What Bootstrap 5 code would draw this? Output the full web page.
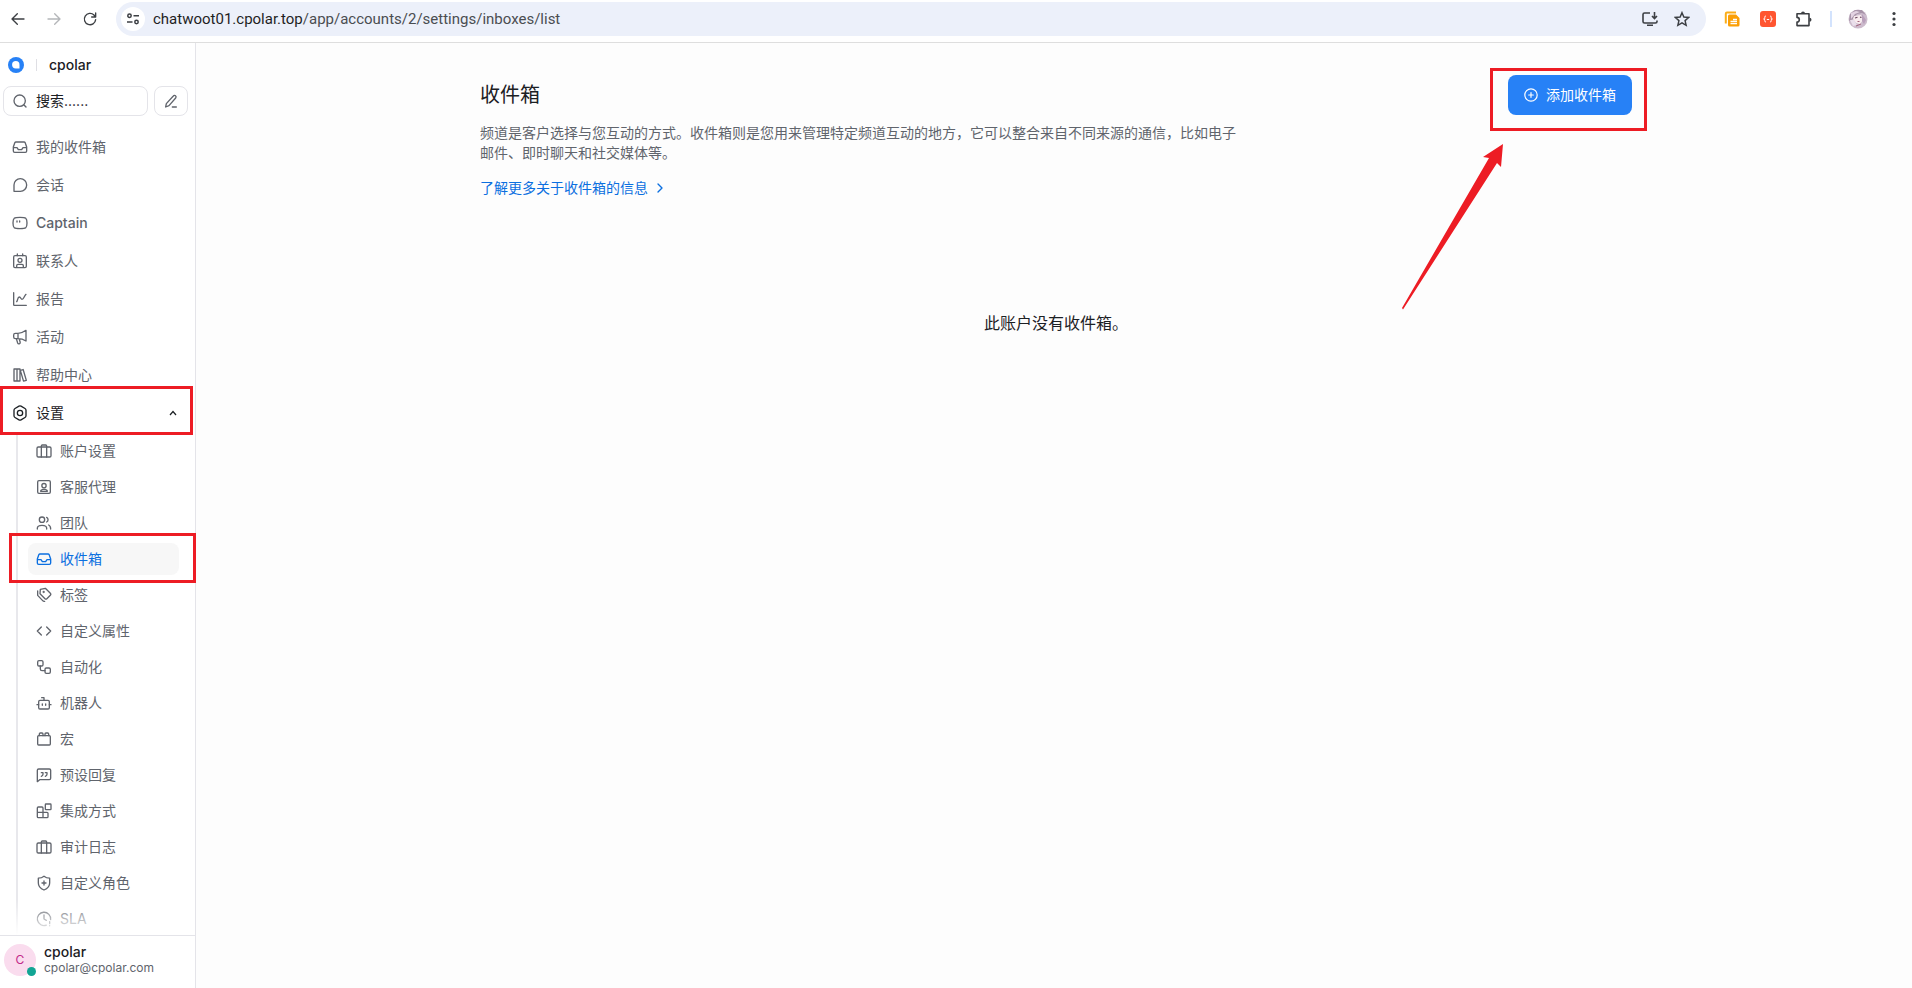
<!DOCTYPE html>
<html lang="zh-CN">
<head>
<meta charset="utf-8">
<meta name="viewport" content="width=device-width, initial-scale=1">
<title>收件箱</title>
<link rel="stylesheet" href="https://cdn.jsdelivr.net/npm/bootstrap@5.3.0/dist/css/bootstrap.min.css">
<style>
  body { font-family: Inter, "Noto Sans CJK SC", sans-serif; font-size: 14px; line-height: 20px; color: #1c2024; background: #fdfdfd; }
  svg { flex: none; display: block; }
  .ico { width: 16px; height: 16px; fill: none; stroke: currentColor; stroke-width: 2; stroke-linecap: round; stroke-linejoin: round; }
  .bare { border: 0; background: none; padding: 0; color: inherit; }
  .muted { color: #60646c; }

  .toolbar { height: 43px; padding: 2px 8px 6px 10px; border-bottom: 1px solid #dedede; background: #fff; color: #3c3f43; }
  .toolbar-nav { width: 106px; gap: 20px; }
  .toolbar-nav .off { color: #b4b6b9; }
  .omnibox { height: 34px; background: #ecf0fa; padding: 0 16px 0 5px; }
  .site-info { width: 24px; height: 24px; background: #fff; }
  .url { font-family: Roboto, sans-serif; font-size: 15px; color: #4a4d51; text-decoration: none; }
  .url b { font-weight: 400; color: #1f1f1f; }
  .toolbar-ext { width: 198px; padding-left: 16px; gap: 16px; }
  .toolbar-sep { flex: none; width: 2px; height: 16px; background: #d3e3fd; }

  .sidebar { width: 196px; background: #fff; border-right: 1px solid #e4e4e9; }
  .brand { height: 43px; padding: 0 8px; font-weight: 500; }
  .brand-sep { width: 1px; height: 12px; background: #dfdfe4; margin: 0 12px; }
  .finder { padding: 0 7px 16px 3px; gap: 6px; }
  .outlined { height: 30px; border: 1px solid #e4e4e9; border-radius: 8px; background: #fff; }
  .finder-field { padding-left: 8px; gap: 8px; min-width: 0; }
  .finder-field input { outline: 0; width: 100%; min-width: 0; }
  .finder-field input::placeholder { color: #1c2024; opacity: 1; }
  .compose { flex: none; width: 34px; }
  .menu { gap: 8px; }
  .menu-link { height: 30px; padding: 0 18px 0 12px; gap: 8px; color: #60646c; text-decoration: none; font-weight: 500; }
  .menu-link.open { color: #1c2024; }
  .menu-link.cjk { font-weight: 400; }
  .submenu { margin-left: 16px; border-left: 2px solid #e8e8ec; padding: 0 16px 0 10px; gap: 4px; margin-top: 7px; }
  .submenu a { height: 32px; padding: 0 8px; gap: 8px; border-radius: 8px; color: #60646c; text-decoration: none; }
  .submenu a.current { color: #0b6fe0; background: #f7f7f7; }
  .fade-end { left: 0; right: 0; bottom: 0; height: 36px; background: linear-gradient(to top, #fff, #fff0); pointer-events: none; }
  .profile { height: 53px; padding: 0 4px 4px; gap: 8px; border-top: 1px solid #e4e4e9; }
  .profile-pic { width: 32px; height: 32px; font-size: 12px; background: #fadcee; color: #c2298a; }
  .status-dot { width: 9px; height: 9px; background: #12a594; right: 0; bottom: 0; }
  .profile-name { line-height: 16px; font-weight: 500; }
  .profile-mail { font-size: 12px; line-height: 16px; }

  .content { padding: 32px 0 32px 4px; }
  .sheet { max-width: 1152px; }
  .page-title { font-size: 20px; line-height: 40px; font-weight: 400; margin-bottom: 8px; }
  .intro { max-width: 768px; margin-bottom: 15px; }
  .more { color: #0b6fe0; text-decoration: none; gap: 4px; }
  .add-btn { height: 40px; padding: 0 16px; border: 0; border-radius: 8px; background: #2781f6; color: #fff; gap: 8px; }
  .add-btn svg { width: 14px; height: 14px; }
  .empty { font-size: 16px; line-height: 24px; margin-top: 113px; }

  .callout { border: 3px solid #ed1c24; pointer-events: none; }
  .callout-settings { left: 0; right: 2px; top: -12px; height: 49px; }
  .callout-inbox { left: -19px; right: -17px; top: -10px; height: 50px; }
  .callout-add { left: -18px; right: -15px; top: -7px; height: 63px; }
  .pointer { left: -108px; top: 68px; }
</style>
</head>
<body>
<svg width="0" height="0" class="position-absolute" aria-hidden="true">
  <symbol id="i-inbox" viewBox="0 0 24 24"><path d="M2 13h5.500l2 3h5l2-3H22M6 4.500h12a2 2 0 0 1 1.800 1.200L22 12v6a2 2 0 0 1-2 2H4a2 2 0 0 1-2-2v-6l2.200-6.300A2 2 0 0 1 6 4.500z"/></symbol>
  <symbol id="i-case" viewBox="0 0 24 24"><rect x="1.500" y="6" width="21" height="15" rx="2"/><path d="M8 21V4.500A1.500 1.500 0 0 1 9.500 3h5A1.500 1.500 0 0 1 16 4.500V21"/></symbol>
</svg>
<div class="d-flex flex-column vh-100">
  <header class="toolbar d-flex align-items-center">
    <div class="toolbar-nav d-flex align-items-center">
      <button class="bare" aria-label="后退"><svg class="ico" viewBox="0 0 24 24"><path d="M21 12H4M11 4l-8 8 8 8"/></svg></button>
      <button class="bare off" aria-label="前进"><svg class="ico" viewBox="0 0 24 24"><path d="M3 12h17M13 4l8 8-8 8"/></svg></button>
      <button class="bare" aria-label="刷新"><svg class="ico" viewBox="0 0 24 24"><path d="M20.500 13a8.500 8.500 0 1 1-2.500-7l2.500 3M20.500 3v6h-6"/></svg></button>
    </div>
    <div class="omnibox d-flex align-items-center flex-grow-1 rounded-pill">
      <button class="bare site-info rounded-circle d-flex align-items-center justify-content-center" aria-label="网站信息"><svg width="12" height="12" viewBox="0 0 12 12" fill="none" stroke="currentColor" stroke-width="1.500"><circle cx="2.500" cy="2.800" r="1.700"/><path d="M6.500 2.800H12M0 9h5.500"/><circle cx="9.500" cy="9" r="1.700"/></svg></button>
      <a class="url ms-2 me-auto" href="#"><b>chatwoot01.cpolar.top</b>/app/accounts/2/settings/inboxes/list</a>
      <button class="bare me-3" aria-label="安装"><svg width="16" height="16" viewBox="0 0 16 16" fill="none" stroke="currentColor" stroke-width="1.600"><path d="M8 2H2.500a1.500 1.500 0 0 0-1.500 1.500v7A1.500 1.500 0 0 0 2.500 12h11a1.500 1.500 0 0 0 1.500-1.500V9.500M12.500 1v6M10 5l2.500 2.500L15 5M5 14.200h6"/></svg></button>
      <button class="bare" aria-label="收藏"><svg width="16" height="16" viewBox="0 0 24 24" fill="none" stroke="currentColor" stroke-width="2.200"><path d="M12 2.500l2.800 6.600 7.200.600-5.400 4.700 1.600 7L12 17.700l-6.200 3.700 1.600-7L2 9.700l7.200-.600z"/></svg></button>
    </div>
    <div class="toolbar-ext d-flex align-items-center">
      <button class="bare" aria-label="笔记扩展"><svg width="20" height="16" viewBox="0 0 20 16"><path d="M3.800 12.500V2.700A1.200 1.200 0 0 1 5 1.500h9" fill="none" stroke="#fbad18" stroke-width="2"/><path d="M7.500 3.500H14l3.500 3.500v7a1.500 1.500 0 0 1-1.500 1.500H7.500A1.500 1.500 0 0 1 6 14V5a1.500 1.500 0 0 1 1.500-1.500z" fill="#fb9f05"/><path d="M11 8.500h4M8.500 10.500h6.500M8.500 12.700h6.500" stroke="#fff" stroke-width="1.300"/></svg></button>
      <button class="bare" aria-label="JSON 扩展"><svg width="20" height="16" viewBox="-2 0 20 16"><rect width="16" height="16" rx="3" fill="#ff5530"/><path d="M6 5c-1.500 0-1.200 1-1.200 2S4.200 8 3.600 8c.6 0 1.200.2 1.200 1s-.3 2 1.200 2M10 5c1.500 0 1.200 1 1.200 2s.6 1 1.200 1c-.6 0-1.200.2-1.200 1s.3 2-1.200 2M6.800 8.500h2.400" fill="none" stroke="#fff"/></svg></button>
      <button class="bare" aria-label="扩展程序"><svg width="20" height="16" viewBox="-2 0 20 16" fill="none" stroke="currentColor" stroke-width="1.600"><path d="M1 2.800h12v11.800H1V11a2.300 2.300 0 0 0 0-4.600z" stroke-linejoin="round"/><path d="M5 2.500a2 2 0 0 1 4 0zM13.500 6.700a2 2 0 0 1 0 4z" fill="currentColor" stroke="none"/></svg></button>
      <span class="toolbar-sep"></span>
      <button class="bare" aria-label="个人资料"><svg width="20" height="20" viewBox="0 0 20 20"><circle cx="10" cy="10" r="9.500" fill="#cdbccd"/><path d="M2 5l5-4 7 0 4 5-4-2-5 1-4 5-4 2z" fill="#a894a9"/><path d="M3 4l5-2 4 1-5 2-4 5z" fill="#e3d3e2"/><path d="M6 7l7-1 2 5-3 4-4-1-3-4z" fill="#f8ecef"/><path d="M7 9l2.500-.800M12 8.200l1.500.300" stroke="#6b4760" stroke-width="1.200"/><path d="M14 5l4 6-2 4-2-3z" fill="#b9a0bb"/><path d="M2 11l4 0 3 5-4 1z" fill="#eadfeb"/><path d="M9.500 12.500l2 0M8 17l5-2" stroke="#a3647c"/></svg></button>
      <button class="bare" aria-label="菜单"><svg width="20" height="16" viewBox="0 0 20 16" fill="currentColor"><circle cx="10" cy="2.500" r="1.600"/><circle cx="10" cy="8" r="1.600"/><circle cx="10" cy="13.500" r="1.600"/></svg></button>
    </div>
  </header>

  <div class="d-flex flex-grow-1 overflow-hidden">
    <aside class="sidebar d-flex flex-column flex-shrink-0">
      <div class="brand d-flex align-items-center">
        <svg width="16" height="16" viewBox="0 0 16 16"><circle cx="8" cy="8" r="8" fill="#2781f6"/><path d="M11.500 11.500H7.800a3.700 3.700 0 1 1 3.700-3.700z" fill="#fff"/></svg>
        <span class="brand-sep"></span><span>cpolar</span>
      </div>
      <div class="finder d-flex">
        <label class="outlined finder-field d-flex align-items-center flex-grow-1">
          <svg class="ico muted" viewBox="0 0 24 24"><circle cx="11.500" cy="11.500" r="8.500"/><path d="M18 18l3 3"/></svg>
          <input class="bare" type="text" placeholder="搜索......" aria-label="搜索">
        </label>
        <button class="outlined compose p-0 muted d-flex align-items-center justify-content-center" aria-label="写信"><svg class="ico" viewBox="0 0 24 24"><path d="M5 16L15.500 4.500a2.300 2.300 0 0 1 3.500 3L9 19l-5 2zM14 21h6"/></svg></button>
      </div>
      <nav class="position-relative flex-grow-1">
        <div class="menu d-flex flex-column">
          <a class="menu-link cjk d-flex align-items-center" href="#"><svg class="ico"><use href="#i-inbox"/></svg>我的收件箱</a>
          <a class="menu-link cjk d-flex align-items-center" href="#"><svg class="ico" viewBox="0 0 24 24"><path d="M3 21.500V12a9.500 9.500 0 1 1 9.500 9.500z"/></svg>会话</a>
          <a class="menu-link d-flex align-items-center" href="#"><svg class="ico" viewBox="0 0 24 24"><path d="M12 3.500c9 0 10.500 1 10.500 8.500s-1.500 8.500-10.500 8.500S1.500 19.500 1.500 12 3 3.500 12 3.500zM7.500 9v1.500M11.500 9v1.500"/></svg>Captain</a>
          <a class="menu-link cjk d-flex align-items-center" href="#"><svg class="ico" viewBox="0 0 24 24"><rect x="2.500" y="4" width="19" height="18" rx="2"/><circle cx="12" cy="11" r="3"/><path d="M7 21.500V19a2 2 0 0 1 2-2h6a2 2 0 0 1 2 2v2.500M8 1.500V4M16 1.500V4"/></svg>联系人</a>
          <a class="menu-link cjk d-flex align-items-center" href="#"><svg class="ico" viewBox="0 0 24 24"><path d="M2.500 2.500v18a1 1 0 0 0 1 1h18M7 16c2-2 1-7 4-7 2.500 0 2 3.500 4 3.500 3 0 3-5 6-7.500"/></svg>报告</a>
          <a class="menu-link cjk d-flex align-items-center" href="#"><svg class="ico" viewBox="0 0 24 24"><path d="M9 6.500c5 0 8-1.500 12-4.500v16c-4-2.500-7-3.500-12-3.500H5a2.500 2.500 0 0 1-2.500-2.500V9A2.500 2.500 0 0 1 5 6.500zM9 6.500v8M6.500 14.500l2 6.500a2 2 0 0 0 3.800-1.200l-1.500-5"/></svg>活动</a>
          <a class="menu-link cjk d-flex align-items-center" href="#"><svg class="ico" viewBox="0 0 24 24"><path d="M3 3h4.500v18H3zM7.500 3H12v18H7.500zM12.500 5l4.200-1.200L21.500 20l-4.200 1.200z"/></svg>帮助中心</a>
          <a class="menu-link cjk open d-flex align-items-center position-relative" href="#"><svg class="ico" viewBox="0 0 24 24"><path d="M10.500 1.800a3 3 0 0 1 3 0l6 3.500a3 3 0 0 1 1.500 2.600v8.200a3 3 0 0 1-1.500 2.600l-6 3.500a3 3 0 0 1-3 0l-6-3.500A3 3 0 0 1 3 16.100V7.900a3 3 0 0 1 1.500-2.600z"/><circle cx="12" cy="12" r="4"/></svg>设置
            <svg class="ms-auto" width="8" height="8" viewBox="0 0 8 8" fill="none" stroke="currentColor" stroke-width="1.200"><path d="M1 6l3-3.500L7 6"/></svg>
            <span class="callout callout-settings position-absolute"></span></a>
        </div>
        <div class="submenu d-flex flex-column">
          <a class="d-flex align-items-center" href="#"><svg class="ico"><use href="#i-case"/></svg>账户设置</a>
          <a class="d-flex align-items-center" href="#"><svg class="ico" viewBox="0 0 24 24"><rect x="2.500" y="2.500" width="19" height="19" rx="2"/><circle cx="12" cy="10" r="3.200"/><path d="M7 18.500c0-4 10-4 10 0z"/></svg>客服代理</a>
          <a class="d-flex align-items-center" href="#"><svg class="ico" viewBox="0 0 24 24"><circle cx="9" cy="7" r="4"/><path d="M2 21v-1c0-6 14-6 14 0v1M16 3.500a4 4 0 0 1 0 7M19 15c2 .800 3 2.500 3 6"/></svg>团队</a>
          <a class="current d-flex align-items-center position-relative" href="#"><svg class="ico"><use href="#i-inbox"/></svg>收件箱<span class="callout callout-inbox position-absolute"></span></a>
          <a class="d-flex align-items-center" href="#"><svg class="ico" viewBox="0 0 24 24"><path d="M6.500 3.500L14 2l7.500 7.500a2 2 0 0 1 0 2.800l-5.200 5.200a2 2 0 0 1-2.800 0L6 10zM2.500 6v6.500L10 20.500a3 3 0 0 0 3 1"/><circle cx="11.500" cy="7.500" r=".7"/></svg>标签</a>
          <a class="d-flex align-items-center" href="#"><svg class="ico" viewBox="0 0 24 24"><path d="M8 6l-6 6 6 6M16 6l6 6-6 6"/></svg>自定义属性</a>
          <a class="d-flex align-items-center" href="#"><svg class="ico" viewBox="0 0 24 24"><rect x="2.500" y="2.500" width="8" height="8" rx="2"/><rect x="13.500" y="13.500" width="8" height="8" rx="2"/><path d="M6.500 10.500V15a2.500 2.500 0 0 0 2.500 2.500h4.500"/></svg>自动化</a>
          <a class="d-flex align-items-center" href="#"><svg class="ico" viewBox="0 0 24 24"><rect x="4" y="8" width="16" height="13" rx="2"/><path d="M12 8V4H8.500M1.500 14.500H4M20 14.500h2.500M9.500 13.500v2M14.500 13.500v2"/></svg>机器人</a>
          <a class="d-flex align-items-center" href="#"><svg class="ico" viewBox="0 0 24 24"><rect x="2.500" y="7" width="19" height="14" rx="1.500"/><path d="M5 7V4.500A1.500 1.500 0 0 1 6.500 3H9a1.500 1.500 0 0 1 1.500 1.500V7M13.500 7V4.500A1.500 1.500 0 0 1 15 3h2.500A1.500 1.500 0 0 1 19 4.500V7"/></svg>宏</a>
          <a class="d-flex align-items-center" href="#"><svg class="ico" viewBox="0 0 24 24"><path d="M2 22V5a2 2 0 0 1 2-2h16a2 2 0 0 1 2 2v12a2 2 0 0 1-2 2H5.500zM8 8.500h2.500V11c0 1.500-1 2.500-2.500 3M14 8.500h2.500V11c0 1.500-1 2.500-2.500 3"/></svg>预设回复</a>
          <a class="d-flex align-items-center" href="#"><svg class="ico" viewBox="0 0 24 24"><rect x="14" y="1.500" width="8.500" height="8.500" rx="1"/><path d="M10.500 22V7.500a1.500 1.500 0 0 0-1.500-1.500H3.500A1.500 1.500 0 0 0 2 7.500v13A1.500 1.500 0 0 0 3.500 22h13a1.500 1.500 0 0 0 1.500-1.500V15.500a1.500 1.500 0 0 0-1.500-1.500H2"/></svg>集成方式</a>
          <a class="d-flex align-items-center" href="#"><svg class="ico"><use href="#i-case"/></svg>审计日志</a>
          <a class="d-flex align-items-center" href="#"><svg class="ico" viewBox="0 0 24 24"><path d="M12 1.800c2 1.700 5 3 8.500 3V12c0 5.500-3.500 8.500-8.500 10.500C7 20.500 3.500 17.500 3.500 12V4.800c3.500 0 6.500-1.300 8.500-3zM12 9v6M9 12h6"/></svg>自定义角色</a>
          <a class="d-flex align-items-center" href="#"><svg class="ico" viewBox="0 0 24 24"><path d="M15.500 21.200A10 10 0 1 1 21.900 13M12 6v6l3.500 2M20.500 16v3M20.500 22v.1"/></svg>SLA</a>
        </div>
        <div class="fade-end position-absolute"></div>
      </nav>
      <div class="profile d-flex align-items-center">
        <div class="profile-pic rounded-circle position-relative d-flex align-items-center justify-content-center">C<span class="status-dot rounded-circle position-absolute"></span></div>
        <div>
          <div class="profile-name">cpolar</div>
          <div class="profile-mail muted">cpolar@cpolar.com</div>
        </div>
      </div>
    </aside>

    <main class="content flex-grow-1">
      <div class="sheet mx-auto">
        <div class="d-flex justify-content-between align-items-start">
          <div>
            <h1 class="page-title">收件箱</h1>
            <p class="intro muted">频道是客户选择与您互动的方式。收件箱则是您用来管理特定频道互动的地方，它可以整合来自不同来源的通信，比如电子邮件、即时聊天和社交媒体等。</p>
            <a class="more d-inline-flex align-items-center" href="#">了解更多关于收件箱的信息 <svg class="ico" viewBox="0 0 24 24"><path d="M9 6l6 6-6 6"/></svg></a>
          </div>
          <div class="position-relative flex-shrink-0">
            <button class="add-btn d-flex align-items-center"><svg viewBox="0 0 14 14" fill="none" stroke="currentColor" stroke-width="1.200" stroke-linecap="round"><circle cx="7" cy="7" r="6.200"/><path d="M7 4.700v4.600M4.700 7h4.600"/></svg>添加收件箱</button>
            <span class="callout callout-add position-absolute"></span>
            <svg class="pointer position-absolute" width="104" height="170" viewBox="0 0 104 170" fill="#ed1c24" aria-hidden="true"><path d="M103 1L83 14l6 1L2 165l1 1.500L97 20l4 4z"/></svg>
          </div>
        </div>
        <p class="empty text-center">此账户没有收件箱。</p>
      </div>
    </main>
  </div>
</div>
<script src="https://cdn.jsdelivr.net/npm/bootstrap@5.3.0/dist/js/bootstrap.bundle.min.js"></script>
</body>
</html>
